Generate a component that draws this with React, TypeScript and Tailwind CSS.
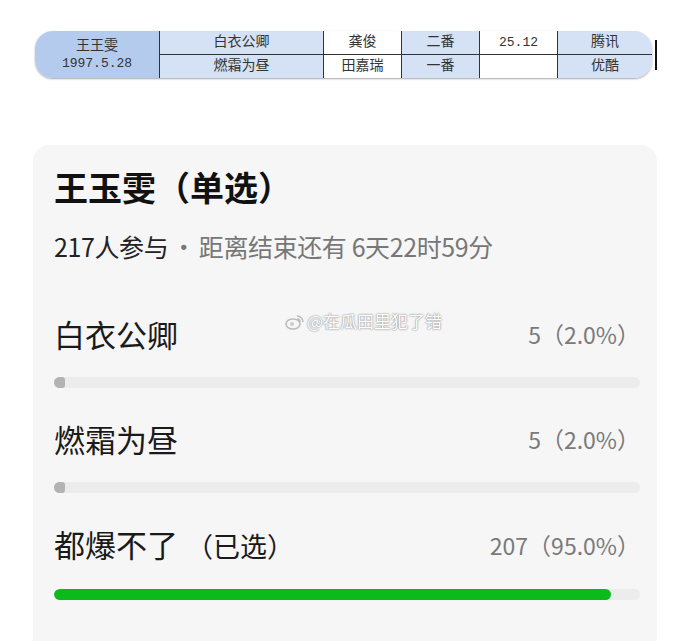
const FONT = { fontFamily: '"Noto Sans CJK SC", "Noto Sans", sans-serif' };
const TABLE_FONT = { fontFamily: '"Liberation Mono", "Noto Sans CJK SC", monospace' };

const OPTIONS = [
  { label: '白衣公卿', picked: false, count: '5（2.0%）', pct: 2 },
  { label: '燃霜为昼', picked: false, count: '5（2.0%）', pct: 2 },
  { label: '都爆不了', picked: true, count: '207（95.0%）', pct: 95 },
];

function DramaTable() {
  return (
    <div className="flex items-center pl-[35px] pr-[33px] pt-[31px]" style={TABLE_FONT}>
      <div className="flex flex-1 h-[47px] text-[14px] text-[#333] shadow-[0_1px_2px_rgba(0,0,0,0.35)] rounded-[18px]">
        <div className="w-[125px] bg-[#b5cbed] rounded-l-[18px] flex flex-col items-center justify-center leading-[18px] border-r border-[#333]">
          <span>王王雯</span>
          <span className="text-[13px]">1997.5.28</span>
        </div>
        <div className="flex flex-col flex-1">
          <div className="flex h-[24px] border-b border-[#333]">
            <div className="w-[164px] bg-[#d5e1f5] flex items-center justify-center border-r border-[#333]">白衣公卿</div>
            <div className="w-[78px] bg-white flex items-center justify-center border-r border-[#333]">龚俊</div>
            <div className="w-[78px] bg-[#d5e1f5] flex items-center justify-center border-r border-[#333]">二番</div>
            <div className="w-[78px] bg-white flex items-center justify-center border-r border-[#333] text-[13px]">25.12</div>
            <div className="flex-1 bg-[#d5e1f5] flex items-center justify-center rounded-tr-[18px]">腾讯</div>
          </div>
          <div className="flex flex-1">
            <div className="w-[164px] bg-[#d5e1f5] flex items-center justify-center border-r border-[#333]">燃霜为昼</div>
            <div className="w-[78px] bg-white flex items-center justify-center border-r border-[#333]">田嘉瑞</div>
            <div className="w-[78px] bg-[#d5e1f5] flex items-center justify-center border-r border-[#333]">一番</div>
            <div className="w-[78px] bg-white flex items-center justify-center border-r border-[#333]"></div>
            <div className="flex-1 bg-[#d5e1f5] flex items-center justify-center rounded-br-[18px]">优酷</div>
          </div>
        </div>
      </div>
      <div className="w-[2px] h-[30px] bg-[#111] ml-[3px]" />
    </div>
  );
}

function Watermark() {
  return (
    <div
      className="absolute left-[231px] top-[-6px] flex items-center gap-[2px] text-[17px] text-white"
      style={{ textShadow: '0 0 2px #888, 0 0 1px #999' }}
    >
      <svg width="20" height="18" viewBox="0 0 20 18">
        <ellipse cx="8" cy="12" rx="7" ry="5" fill="none" stroke="#bbb" strokeWidth="1.6" />
        <circle cx="7" cy="12" r="2" fill="#ccc" />
        <path d="M12 4 A6 6 0 0 1 18 10" fill="none" stroke="#bbb" strokeWidth="1.5" />
        <path d="M12 7 A3 3 0 0 1 15 10" fill="none" stroke="#bbb" strokeWidth="1.5" />
      </svg>
      <span>@在瓜田里犯了错</span>
    </div>
  );
}

export default function App() {
  return (
    <div className="w-[690px] h-[641px] bg-white overflow-hidden" style={FONT}>
      <DramaTable />
      <div className="mt-[67px] mx-[33px] bg-[#f6f6f6] rounded-t-[16px] h-[600px] pt-[19px] pl-[21px] pr-[17px]">
        <h1 className="text-[34px] font-bold text-[#111] leading-[46px]">王玉雯（单选）</h1>
        <div className="mt-[20px] text-[25px] leading-[32px] text-[#222] tracking-[-0.4px]">
          217人参与<span className="text-[#777]"><span className="mx-[3px]">·</span>距离结束还有 6天22时59分</span>
        </div>
        <div className="mt-[52px] flex flex-col gap-[31px]">
          {OPTIONS.map((o, i) => (
            <div key={o.label} className="relative">
              {i === 0 && <Watermark />}
              <div className="flex items-center justify-between">
                <span className="text-[31px] text-[#1a1a1a] leading-[40px]">
                  {o.label}
                  {o.picked && <span className="text-[27px] ml-[8px]">（已选）</span>}
                </span>
                <span className="text-[23px] text-[#7a7a7a]">{o.count}</span>
              </div>
              <div className="mt-[23px] h-[11px] rounded-full bg-[#ececec] overflow-hidden">
                <div
                  className={o.picked ? 'h-full rounded-full bg-[#0dba1b]' : 'h-full rounded-[3px] bg-[#b3b3b3]'}
                  style={{ width: o.picked ? `${o.pct}%` : '11px' }}
                />
              </div>
            </div>
          ))}
        </div>
      </div>
    </div>
  );
}
